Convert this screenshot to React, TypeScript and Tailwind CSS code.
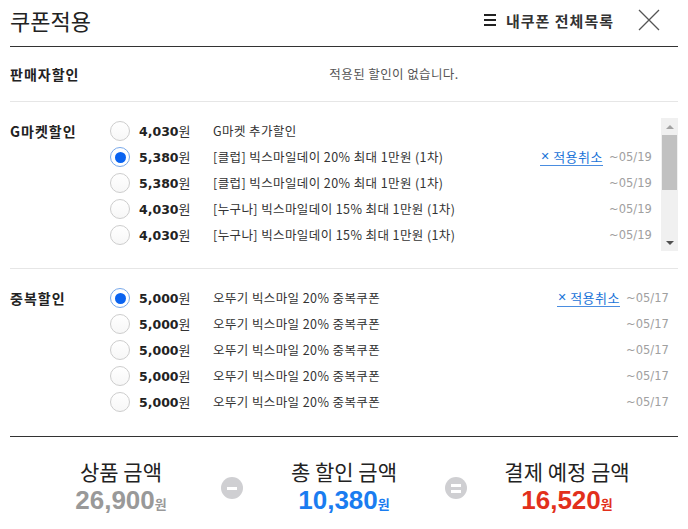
import React from 'react';

type Coupon = {
  amount: string;
  name: string;
  until: string;
  checked?: boolean;
};

const GMARKET: Coupon[] = [
  { amount: '4,030', name: 'G마켓 추가할인', until: '' },
  { amount: '5,380', name: '[클럽] 빅스마일데이 20% 최대 1만원 (1차)', until: '~05/19', checked: true },
  { amount: '5,380', name: '[클럽] 빅스마일데이 20% 최대 1만원 (1차)', until: '~05/19' },
  { amount: '4,030', name: '[누구나] 빅스마일데이 15% 최대 1만원 (1차)', until: '~05/19' },
  { amount: '4,030', name: '[누구나] 빅스마일데이 15% 최대 1만원 (1차)', until: '~05/19' },
  { amount: '3,000', name: '[누구나] 빅스마일데이 10% 최대 5천원 (2차)', until: '~05/19' },
  { amount: '2,690', name: '[클럽] 빅스마일데이 10% 최대 5천원 (2차)', until: '~05/19' },
  { amount: '2,000', name: '[누구나] 신규 회원 할인쿠폰', until: '~05/31' },
  { amount: '1,000', name: '[누구나] 앱 전용 할인쿠폰', until: '~05/31' },
];

const DUPLICATE: Coupon[] = [
  { amount: '5,000', name: '오뚜기 빅스마일 20% 중복쿠폰', until: '~05/17', checked: true },
  { amount: '5,000', name: '오뚜기 빅스마일 20% 중복쿠폰', until: '~05/17' },
  { amount: '5,000', name: '오뚜기 빅스마일 20% 중복쿠폰', until: '~05/17' },
  { amount: '5,000', name: '오뚜기 빅스마일 20% 중복쿠폰', until: '~05/17' },
  { amount: '5,000', name: '오뚜기 빅스마일 20% 중복쿠폰', until: '~05/17' },
];

const Radio = ({ checked }: { checked?: boolean }) =>
  checked ? (
    <span className="shrink-0 w-[20px] h-[20px] rounded-full border-[1.5px] border-[#78a8ea] bg-white flex items-center justify-center">
      <span className="w-[11px] h-[11px] rounded-full bg-[#0a63f0]" />
    </span>
  ) : (
    <span className="shrink-0 w-[20px] h-[20px] rounded-full border border-[#cdcdcd] bg-gradient-to-b from-white to-[#f7f7f7]" />
  );

const CouponRow = ({ c }: { c: Coupon }) => (
  <div className="h-[26px] flex items-center leading-[18px]">
    <Radio checked={c.checked} />
    <div className="w-[83px] pl-[9px] flex items-baseline">
      <span className="font-['DejaVu_Sans'] font-bold text-[12.5px] text-[#222]">{c.amount}</span>
      <span className="text-[13px] text-[#333]">원</span>
    </div>
    <span className="flex-1 text-[12.5px] tracking-[0.4px] text-[#333] whitespace-nowrap">{c.name}</span>
    {c.checked && (
      <span className="flex items-center gap-[3px] border-b border-[#4a8de0] text-[#1a73d8] text-[13px] tracking-[0.5px] leading-[17px] mr-[6px]">
        <span className="font-['DejaVu_Sans'] font-bold text-[11px]">✕</span>
        적용취소
      </span>
    )}
    <span className="w-[42px] text-right font-['DejaVu_Sans'] text-[11.5px] text-[#a0a0a0]">{c.until}</span>
  </div>
);

export default function App() {
  return (
    <div className="w-[688px] h-[529px] bg-white font-['Noto_Sans_CJK_KR',sans-serif] text-[#222] overflow-hidden">
      {/* Header */}
      <div className="mx-[10px] h-[47px] border-b border-[#333] flex items-center">
        <h1 className="flex-1 text-[22px] leading-none text-[#222] pb-[6px]">쿠폰적용</h1>
        <div className="flex items-center gap-[10px] pb-[6px] mr-[24px]">
          <span className="flex flex-col gap-[3px] w-[12px]">
            <span className="h-[2px] bg-[#222]" />
            <span className="h-[2px] bg-[#222]" />
            <span className="h-[2px] bg-[#222]" />
          </span>
          <span className="text-[15px] tracking-[1px] font-bold text-[#333] leading-none">내쿠폰 전체목록</span>
        </div>
        <svg width="22" height="22" viewBox="0 0 22 22" className="mb-[6px] mr-[18px]">
          <path d="M1 1 L21 21 M21 1 L1 21" stroke="#555" strokeWidth="1.3" fill="none" />
        </svg>
      </div>

      {/* 판매자할인 */}
      <div className="mx-[10px] h-[55px] border-b border-[#e6e6e6] flex items-center">
        <span className="w-[100px] text-[14px] tracking-[1px] font-bold text-[#222]">판매자할인</span>
        <span className="flex-1 text-center text-[12.5px] tracking-[0.4px] text-[#555]">적용된 할인이 없습니다.</span>
      </div>

      {/* G마켓할인 */}
      <div className="mx-[10px] pt-[16px] pb-[17px] border-b border-[#e6e6e6] flex">
        <span className="w-[100px] text-[14px] tracking-[1px] font-bold text-[#222] leading-[26px]">G마켓할인</span>
        <div className="flex-1 flex">
          <div className="flex-1 h-[133px] overflow-hidden pr-[10px]">
            {GMARKET.map((c, i) => (
              <CouponRow key={i} c={c} />
            ))}
          </div>
          <div className="w-[17px] h-[133px] bg-[#f0f0f0] flex flex-col items-center">
            <div className="h-[17px] flex items-center justify-center">
              <span className="w-0 h-0 border-x-[4px] border-x-transparent border-b-[4px] border-b-[#a3a3a3]" />
            </div>
            <div className="w-[15px] h-[55px] bg-[#c1c1c1]" />
            <div className="flex-1" />
            <div className="h-[17px] flex items-center justify-center">
              <span className="w-0 h-0 border-x-[4px] border-x-transparent border-t-[4px] border-t-[#505050]" />
            </div>
          </div>
        </div>
      </div>

      {/* 중복할인 */}
      <div className="mx-[10px] pt-[16px] pb-[21px] border-b border-[#333] flex">
        <span className="w-[100px] text-[14px] tracking-[1px] font-bold text-[#222] leading-[26px]">중복할인</span>
        <div className="flex-1 pr-[10px]">
          {DUPLICATE.map((c, i) => (
            <CouponRow key={i} c={c} />
          ))}
        </div>
      </div>

      {/* 합계 */}
      <div className="flex items-center justify-center pt-[20px]">
        <div className="w-[200px] flex flex-col items-center">
          <span className="text-[21px] leading-[28px] text-[#222]">상품 금액</span>
          <span className="font-['Liberation_Sans'] font-bold text-[26px] leading-[30px] text-[#999]">
            26,900<span className="font-['Noto_Sans_CJK_KR'] text-[13px]">원</span>
          </span>
        </div>
        <span className="w-[22px] h-[22px] rounded-full bg-[#cfcfd2] flex items-center justify-center">
          <span className="w-[10px] h-[3px] bg-white" />
        </span>
        <div className="w-[202px] flex flex-col items-center">
          <span className="text-[21px] leading-[28px] text-[#222]">총 할인 금액</span>
          <span className="font-['Liberation_Sans'] font-bold text-[26px] leading-[30px] text-[#1a7cf0]">
            10,380<span className="font-['Noto_Sans_CJK_KR'] text-[13px]">원</span>
          </span>
        </div>
        <span className="w-[22px] h-[22px] rounded-full bg-[#cfcfd2] flex flex-col items-center justify-center gap-[3px]">
          <span className="w-[10px] h-[3px] bg-white" />
          <span className="w-[10px] h-[3px] bg-white" />
        </span>
        <div className="w-[200px] flex flex-col items-center">
          <span className="text-[21px] leading-[28px] text-[#222]">결제 예정 금액</span>
          <span className="font-['Liberation_Sans'] font-bold text-[26px] leading-[30px] text-[#e2301c]">
            16,520<span className="font-['Noto_Sans_CJK_KR'] text-[13px]">원</span>
          </span>
        </div>
      </div>
    </div>
  );
}
